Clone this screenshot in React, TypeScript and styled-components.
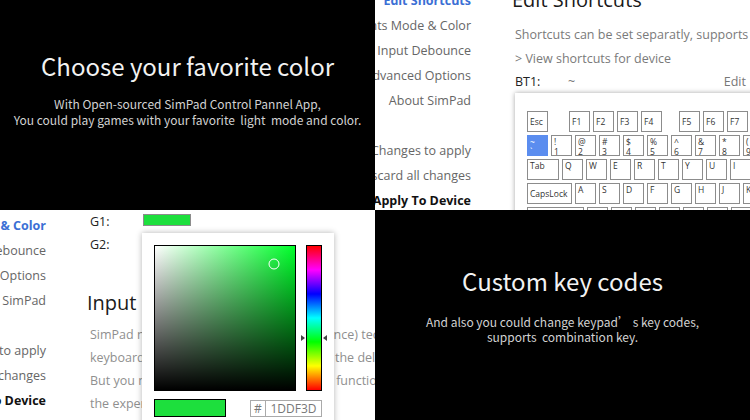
import React from "react";
import styled, { createGlobalStyle } from "styled-components";

const Global = createGlobalStyle`
  html, body { margin: 0; padding: 0; background: #fff; }
  body { width: 750px; height: 420px; overflow: hidden; }
  * { box-sizing: border-box; }
`;

const Board = styled.div`
  display: grid;
  grid-template-columns: 375px 375px;
  grid-template-rows: 210px 210px;
  width: 750px;
  height: 420px;
`;

const Tile = styled.section`
  position: relative;
  overflow: hidden;
  background: #fff;
  font-family: "Open Sans", "Noto Sans", sans-serif;
`;

const AppTile = styled(Tile)`
  display: flex;
  align-items: flex-start;
`;

const Promo = styled.section<{ $top: number }>`
  background: #000;
  overflow: hidden;
  display: flex;
  flex-direction: column;
  align-items: center;
  padding-top: ${(p) => p.$top}px;
  font-family: "Noto Sans CJK SC", "Noto Sans", sans-serif;
  text-align: center;
`;

const PromoTitle = styled.h1`
  margin: 0;
  font-size: 24px;
  line-height: 34px;
  font-weight: 400;
  color: #f2f2f2;
  white-space: nowrap;
`;

const PromoText = styled.p<{ $gap: number; $lh: number }>`
  margin: ${(p) => p.$gap}px 0 0;
  font-size: 12px;
  line-height: ${(p) => p.$lh}px;
  color: #d2d2d2;
  white-space: pre;
`;

/* ---------- settings sidebar ---------- */

const Nav = styled.nav<{ $width: number; $offset: number }>`
  width: ${(p) => p.$width}px;
  flex-shrink: 0;
  display: flex;
  flex-direction: column;
  align-items: flex-end;
  margin-top: ${(p) => p.$offset}px;
  margin-right: 44px;
`;

const NavItem = styled.div<{ $active?: boolean; $strong?: boolean }>`
  height: 25px;
  line-height: 25px;
  white-space: nowrap;
  font-size: 12.5px;
  color: ${(p) => (p.$active ? "#3b6fd5" : p.$strong ? "#111" : "#666")};
  font-weight: ${(p) => (p.$active || p.$strong ? 700 : 400)};
`;

const NavGap = styled.div`
  height: 25px;
`;

const NAV_ITEMS = [
  { id: "shortcuts", label: "Edit Shortcuts" },
  { id: "color", label: "Lights Mode & Color" },
  { id: "debounce", label: "Input Debounce" },
  { id: "advanced", label: "Advanced Options" },
  { id: "about", label: "About SimPad" },
];

function Sidebar({ active, width, offset }: { active: string; width: number; offset: number }) {
  return (
    <Nav $width={width} $offset={offset}>
      {NAV_ITEMS.map((it) => (
        <NavItem key={it.id} $active={it.id === active}>
          {it.label}
        </NavItem>
      ))}
      <NavGap />
      <NavItem>0 Changes to apply</NavItem>
      <NavItem>Discard all changes</NavItem>
      <NavItem $strong>Apply To Device</NavItem>
    </Nav>
  );
}

/* ---------- shortcuts page ---------- */

const Main = styled.div<{ $offset: number }>`
  display: flex;
  flex-direction: column;
  align-items: flex-start;
  flex-shrink: 0;
  margin-top: ${(p) => p.$offset}px;
  white-space: nowrap;
`;

const PageTitle = styled.h2<{ $gap?: number }>`
  margin: ${(p) => p.$gap ?? 0}px 0 0 -3px;
  font-size: 20px;
  line-height: 28px;
  font-weight: 400;
  color: #1a1a1a;
`;

const Desc = styled.div<{ $gap?: number }>`
  margin-top: ${(p) => p.$gap ?? 0}px;
  font-size: 12.5px;
  line-height: 24px;
  color: #7a7a7a;
`;

const BindRow = styled.div`
  display: flex;
  width: 231px;
  height: 22px;
  line-height: 22px;
  font-size: 12.5px;
`;

const BindLabel = styled.span`
  width: 53px;
  color: #222;
`;

const BindValue = styled.span`
  flex: 1;
  color: #777;
`;

const BindAction = styled.span`
  color: #777;
`;

const KeyCard = styled.div`
  width: 420px;
  flex-shrink: 0;
  background: #fff;
  box-shadow: 0 0 5px rgba(0, 0, 0, 0.35);
  padding: 18px 12px;
  display: flex;
  flex-direction: column;
  gap: 3px;
`;

const KeyRow = styled.div`
  display: flex;
  gap: 3px;
`;

const Key = styled.div<{ $w: number; $extra: number; $active?: boolean; $center?: boolean }>`
  width: ${(p) => p.$w}px;
  height: 21px;
  flex-shrink: 0;
  margin-right: ${(p) => p.$extra}px;
  border: 1px solid ${(p) => (p.$active ? "#5b8def" : "#8c8c8c")};
  background: ${(p) => (p.$active ? "#5b8def" : "#fff")};
  color: ${(p) => (p.$active ? "#fff" : "#333")};
  display: flex;
  flex-direction: column;
  justify-content: ${(p) => (p.$center ? "center" : "flex-start")};
  padding: ${(p) => (p.$center ? "0 2px" : "1px 2px 0")};
  font-family: "Open Sans", "Noto Sans", sans-serif;
  font-size: 8.5px;
  line-height: 9.5px;
`;

type KeyDef = { t: string; b?: string; w?: number; x?: number; c?: boolean; a?: boolean };

const k = (t: string, b?: string): KeyDef => ({ t, b });

const KEY_ROWS: KeyDef[][] = [
  [
    { t: "Esc", c: true, x: 18 },
    { t: "F1", c: true },
    { t: "F2", c: true },
    { t: "F3", c: true },
    { t: "F4", c: true, x: 14 },
    { t: "F5", c: true },
    { t: "F6", c: true },
    { t: "F7", c: true },
    { t: "F8", c: true },
  ],
  [
    { t: "~", b: "`", a: true },
    k("!", "1"),
    k("@", "2"),
    k("#", "3"),
    k("$", "4"),
    k("%", "5"),
    k("^", "6"),
    k("&", "7"),
    k("*", "8"),
    k("(", "9"),
    k(")", "0"),
  ],
  [{ t: "Tab", w: 32 }, ..."QWERTYUIOP".split("").map((c) => k(c))],
  [{ t: "CapsLock", w: 45, c: true }, ..."ASDFGHJKL".split("").map((c) => k(c))],
  [{ t: "Shift", w: 57 }, ..."ZXCVBNM".split("").map((c) => k(c))],
];

function Keyboard() {
  return (
    <KeyCard>
      {KEY_ROWS.map((row, i) => (
        <KeyRow key={i}>
          {row.map((key, j) => (
            <Key key={j} $w={key.w ?? 21} $extra={key.x ?? 0} $active={key.a} $center={key.c}>
              <span>{key.t}</span>
              {key.b && <span>{key.b}</span>}
            </Key>
          ))}
        </KeyRow>
      ))}
    </KeyCard>
  );
}

/* ---------- color page ---------- */

const ColorRow = styled.div`
  display: flex;
  align-items: center;
  height: 23px;
  font-size: 12.5px;
  color: #222;
`;

const ColorLabel = styled.span`
  width: 53px;
`;

const ColorChip = styled.span<{ $color: string }>`
  width: 48px;
  height: 12px;
  margin-top: -3px;
  background: ${(p) => p.$color};
  border: 1px solid #8c8c8c;
`;

const Paragraph = styled.div<{ $gap: number }>`
  margin-top: ${(p) => p.$gap}px;
  font-size: 12.5px;
  line-height: 23px;
  color: #8f8f8f;
`;

const Picker = styled.div`
  position: absolute;
  left: 142px;
  top: 23px;
  width: 192px;
  height: 200px;
  background: #fff;
  box-shadow: 0 0 6px rgba(0, 0, 0, 0.3);
  padding: 12px 12px 0;
  display: grid;
  grid-template-columns: 142px 16px;
  column-gap: 10px;
  row-gap: 8px;
  align-content: start;
`;

const SVBox = styled.div<{ $hue: string }>`
  position: relative;
  height: 146px;
  border: 1px solid #000;
  background: linear-gradient(to top, #000, rgba(0, 0, 0, 0)),
    linear-gradient(to right, #fff, ${(p) => p.$hue});
`;

const SVMarker = styled.span`
  position: absolute;
  width: 11px;
  height: 11px;
  border: 1.5px solid #fff;
  border-radius: 50%;
  transform: translate(-50%, -50%);
`;

const HueTrack = styled.div`
  position: relative;
  height: 146px;
  border: 1px solid #000;
  background: linear-gradient(to bottom, #f00 0%, #f0f 16.6%, #00f 33.3%, #0ff 50%, #0f0 66.6%, #ff0 83.3%, #f00 100%);
`;

const HueArrow = styled.span<{ $side: "left" | "right" }>`
  position: absolute;
  top: 0;
  width: 0;
  height: 0;
  border-top: 3.5px solid transparent;
  border-bottom: 3.5px solid transparent;
  ${(p) =>
    p.$side === "left"
      ? "left: -6px; border-left: 4px solid #444;"
      : "right: -6px; border-right: 4px solid #444;"}
  transform: translateY(-50%);
`;

const PickerFoot = styled.div`
  grid-column: 1 / -1;
  display: flex;
  justify-content: space-between;
  align-items: center;
`;

const Preview = styled.div<{ $color: string }>`
  width: 72px;
  height: 18px;
  border: 1px solid #000;
  background: ${(p) => p.$color};
`;

const HexGroup = styled.div`
  display: flex;
  height: 17px;
  font-family: "Open Sans", "Noto Sans", sans-serif;
  font-size: 12px;
  line-height: 15px;
  color: #777;
`;

const HexHash = styled.span`
  width: 16px;
  border: 1px solid #aaa;
  text-align: center;
`;

const HexInput = styled.span`
  width: 56px;
  border: 1px solid #aaa;
  border-left: none;
  text-align: center;
`;

function ColorPicker({ color, hue, sx, sy, hy }: { color: string; hue: string; sx: number; sy: number; hy: number }) {
  return (
    <Picker>
      <SVBox $hue={hue}>
        <SVMarker style={{ left: `${sx * 100}%`, top: `${sy * 100}%` }} />
      </SVBox>
      <HueTrack>
        <HueArrow $side="left" style={{ top: `${hy * 100}%` }} />
        <HueArrow $side="right" style={{ top: `${hy * 100}%` }} />
      </HueTrack>
      <PickerFoot>
        <Preview $color={color} />
        <HexGroup>
          <HexHash>#</HexHash>
          <HexInput>{color.slice(1).toUpperCase()}</HexInput>
        </HexGroup>
      </PickerFoot>
    </Picker>
  );
}

export default function App() {
  const green = "#1ddf3d";
  return (
    <>
      <Global />
      <Board>
        <Promo $top={49}>
          <PromoTitle>Choose your favorite color</PromoTitle>
          <PromoText $gap={13} $lh={16}>
            {"With Open-sourced SimPad Control Pannel App,\nYou could play games with your favorite  light  mode and color."}
          </PromoText>
        </Promo>

        <AppTile>
          <Sidebar active="shortcuts" width={96} offset={-12} />
          <Main $offset={-14}>
            <PageTitle>Edit Shortcuts</PageTitle>
            <Desc $gap={9}>Shortcuts can be set separatly, supports keyboard and mouse.</Desc>
            <Desc>&gt; View shortcuts for device</Desc>
            <BindRow>
              <BindLabel>BT1:</BindLabel>
              <BindValue>~</BindValue>
              <BindAction>Edit</BindAction>
            </BindRow>
            <Keyboard />
          </Main>
        </AppTile>

        <AppTile>
          <Sidebar active="color" width={46} offset={-22} />
          <Main $offset={0}>
            <ColorRow>
              <ColorLabel>G1:</ColorLabel>
              <ColorChip $color={green} />
            </ColorRow>
            <ColorRow>
              <ColorLabel>G2:</ColorLabel>
              <ColorChip $color={green} />
            </ColorRow>
            <PageTitle $gap={33}>Input Debounce</PageTitle>
            <Paragraph $gap={6}>
              SimPad now uses anti-shake (input debounce) technology
              <br />
              keyboard&apos;s scanning, which would reduce the delay
              <br />
              But you may also switch off the debounce function
              <br />
              the experience will be better.
            </Paragraph>
          </Main>
          <ColorPicker color={green} hue="#00ff2b" sx={0.85} sy={0.125} hy={0.637} />
        </AppTile>

        <Promo $top={54}>
          <PromoTitle>Custom key codes</PromoTitle>
          <PromoText $gap={16} $lh={15}>
            {"And also you could change keypad\u2019 s key codes,\nsupports  combination key."}
          </PromoText>
        </Promo>
      </Board>
    </>
  );
}
